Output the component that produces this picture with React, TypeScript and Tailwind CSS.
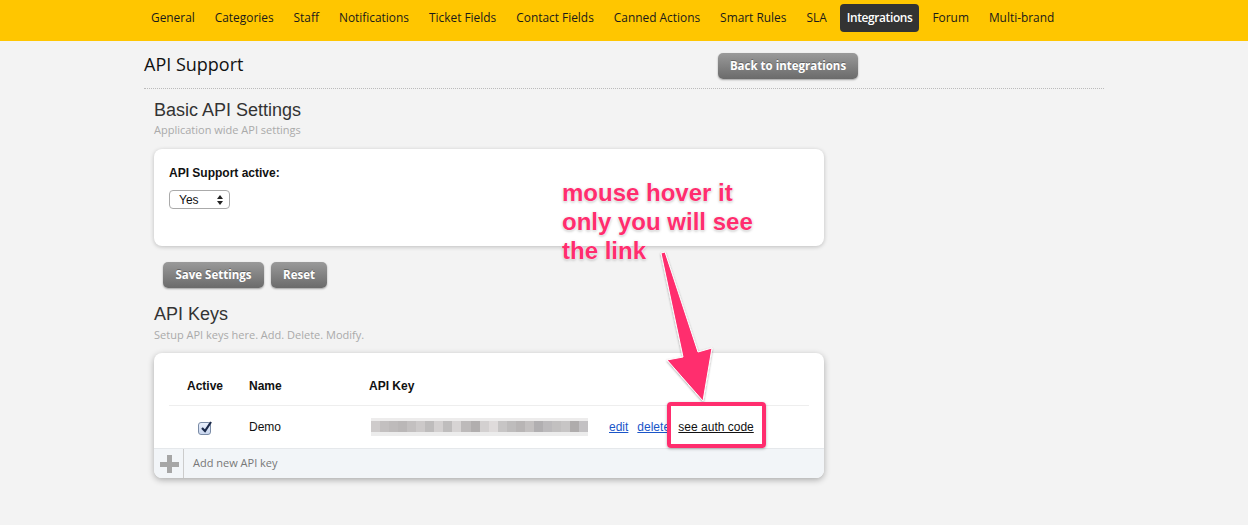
import React from "react";

const navItems = [
  "General",
  "Categories",
  "Staff",
  "Notifications",
  "Ticket Fields",
  "Contact Fields",
  "Canned Actions",
  "Smart Rules",
  "SLA",
  "Integrations",
  "Forum",
  "Multi-brand",
];

const keyBlocks = [
  "#c9c6c6", "#bdbaba", "#b7b4b4", "#b3b0b0", "#bdbaba", "#c7c4c4", "#b8b5b5", "#cfcccc",
  "#b9b6b6", "#d3d0d0", "#b6b3b3", "#a9a6a6", "#cfcccc", "#dcd8d8", "#c2bfbf", "#b8b5b5",
  "#b1aeae", "#bdbaba", "#a9a7a9", "#b5b3b5", "#bcbaba", "#c2bfbf", "#a7a4a4", "#bdbbbd",
];

function GrayButton({ children, className = "" }: { children: React.ReactNode; className?: string }) {
  return (
    <button
      className={
        "h-[26px] rounded-[5px] bg-gradient-to-b from-[#9a9a9a] to-[#6b6b6b] text-white text-[11.5px] font-bold shadow-[0_1px_2px_rgba(0,0,0,0.35)] [text-shadow:0_-1px_0_rgba(0,0,0,0.3)] " +
        className
      }
      style={{ fontFamily: '"Open Sans", sans-serif' }}
    >
      {children}
    </button>
  );
}

export default function App() {
  return (
    <div className="relative w-[1248px] h-[525px] bg-[#f3f3f3] overflow-hidden" style={{ fontFamily: '"Open Sans", sans-serif' }}>
      {/* Top nav */}
      <div className="h-[41px] bg-[#ffc600] flex items-start pl-[144px] pt-[4px]">
        <div className="flex gap-[6px]">
          {navItems.map((n) => (
            <div
              key={n}
              className={
                "h-[28px] px-[7px] flex items-center text-[11.9px] rounded-[4px] " +
                (n === "Integrations" ? "bg-[#333333] text-white font-semibold tracking-[-0.35px]" : "text-[#1a1a1a]")
              }
            >
              {n}
            </div>
          ))}
        </div>
      </div>

      {/* Header */}
      <div className="w-[960px] ml-[144px]">
        <div className="flex items-center h-[48px] border-b border-dotted border-[#bbb]">
          <div className="text-[18px] text-[#111] w-[574px]">API Support</div>
          <GrayButton className="w-[140px] mt-[2px]">Back to integrations</GrayButton>
        </div>
      </div>

      <div className="ml-[154px] w-[670px]">
        {/* Basic API Settings */}
        <div className="mt-[10px] text-[18px] text-[#333] leading-[22px]" style={{ fontFamily: '"Liberation Sans", Arial, sans-serif' }}>
          Basic API Settings
        </div>
        <div className="text-[11px] text-[#aaa] mt-[1px] leading-[16px]">Application wide API settings</div>

        <div className="mt-[11px] h-[97px] bg-white rounded-[8px] shadow-[0_1px_4px_rgba(0,0,0,0.22)] pl-[15px] pt-[17px]" style={{ fontFamily: '"Liberation Sans", Arial, sans-serif' }}>
          <div className="text-[12px] font-bold text-[#111] leading-[14px]">API Support active:</div>
          <div className="mt-[10px] w-[61px] h-[19px] border border-[#aaa] rounded-[4px] flex items-center justify-between pl-[9px] pr-[6px] text-[12px] text-[#111] bg-white">
            <span>Yes</span>
            <svg width="6" height="10" viewBox="0 0 6 10">
              <path d="M3 0 L6 4 H0 Z M3 10 L6 6 H0 Z" fill="#222" />
            </svg>
          </div>
        </div>

        <div className="flex gap-[7px] mt-[16px] ml-[9px]">
          <GrayButton className="w-[101px]">Save Settings</GrayButton>
          <GrayButton className="w-[56px]">Reset</GrayButton>
        </div>

        {/* API Keys */}
        <div className="mt-[15px] text-[18px] text-[#333] leading-[22px]" style={{ fontFamily: '"Liberation Sans", Arial, sans-serif' }}>
          API Keys
        </div>
        <div className="text-[11px] text-[#aaa] mt-[2px] leading-[16px]">Setup API keys here. Add. Delete. Modify.</div>

        <div className="mt-[10px] h-[125px] bg-white rounded-[8px] shadow-[0_2px_6px_rgba(0,0,0,0.3)] overflow-hidden flex flex-col" style={{ fontFamily: '"Liberation Sans", Arial, sans-serif' }}>
          <div className="mx-[15px] h-[53px] border-b border-[#eee] flex items-end pb-[10px] text-[12px] font-bold text-[#111]">
            <div className="w-[80px] pl-[18px]">Active</div>
            <div className="w-[120px]">Name</div>
            <div>API Key</div>
          </div>
          <div className="mx-[15px] h-[42px] flex items-center text-[12px] text-[#111]">
            <div className="w-[80px] pl-[29px] pt-[3px]">
              <div className="w-[13px] h-[13px] rounded-[3px] border border-[#7a8ba6] bg-gradient-to-b from-[#eaf0fb] to-[#c9d6ee] relative">
                <svg className="absolute -top-[3px] left-[1px]" width="13" height="14" viewBox="0 0 13 14">
                  <path d="M2 8 L5 11 L11 2" stroke="#1b2a4a" strokeWidth="2.2" fill="none" />
                </svg>
              </div>
            </div>
            <div className="w-[122px]">Demo</div>
            <div className="w-[238px] flex flex-col opacity-90">
              <div className="flex h-[18px] w-[217px]">
                {keyBlocks.map((c, i) => (
                  <div key={i} className="flex-1 flex flex-col">
                    <div className="h-[3px]" style={{ background: "#ecebeb" }} />
                    <div className="flex-1" style={{ background: c }} />
                    <div className="h-[4px]" style={{ background: "#ebeaea" }} />
                  </div>
                ))}
              </div>
            </div>
            <a className="text-[#1a55c8] underline mr-[9px]">edit</a>
            <a className="text-[#1a55c8] underline w-[32px] overflow-hidden whitespace-nowrap">delete</a>
            <a className="ml-[9px] text-[#111] underline">see auth code</a>
          </div>
          <div className="flex-1 bg-[#f2f5f8] border-t border-[#e5e8eb] flex items-center">
            <div className="w-[30px] h-full flex items-center justify-center border-r border-[#ccc]">
              <svg width="20" height="20" viewBox="0 0 20 20">
                <rect x="8" y="1" width="5" height="18" fill="#a6a6a6" />
                <rect x="1" y="8" width="19" height="5" fill="#a6a6a6" />
              </svg>
            </div>
            <div className="pl-[9px] text-[11px] text-[#777]" style={{ fontFamily: '"Open Sans", sans-serif' }}>Add new API key</div>
          </div>
        </div>
      </div>

      {/* Annotation overlay */}
      <div
        className="absolute left-[562px] top-[178px] text-[24px] leading-[29px] font-bold text-[#ff2d6e] [text-shadow:0_0_2px_#fff,0_0_2px_#fff,0_1px_3px_rgba(0,0,0,0.35)]"
        style={{ fontFamily: '"Liberation Sans", Arial, sans-serif' }}
      >
        <div>mouse hover it</div>
        <div>only you will see</div>
        <div>the link</div>
      </div>
      <svg className="absolute left-0 top-0 pointer-events-none" width="1248" height="525">
        <defs>
          <filter id="sh" x="-20%" y="-20%" width="140%" height="140%">
            <feDropShadow dx="0" dy="1" stdDeviation="1.2" floodColor="#000" floodOpacity="0.35" />
          </filter>
        </defs>
        <polygon
          points="661,253 665,252 698,352 712,348 703,401 667,360 683,357"
          fill="#ff2d6e"
          stroke="#fff"
          strokeWidth="1"
          filter="url(#sh)"
        />
      </svg>
      <div className="absolute left-[667px] top-[402px] w-[99px] h-[46px] border-[4px] border-[#ff2d6e] rounded-[4px] shadow-[0_1px_3px_rgba(0,0,0,0.3)]" />
    </div>
  );
}
